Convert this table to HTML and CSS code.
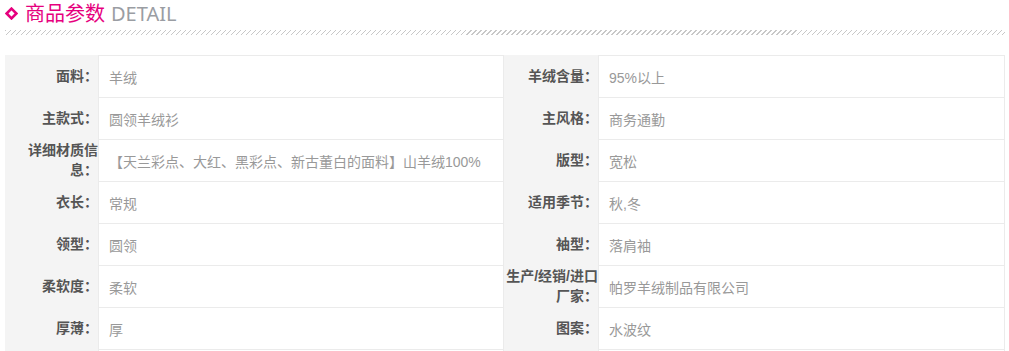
FILE: index.html
```html
<!DOCTYPE html>
<html lang="zh-CN">
<head>
<meta charset="utf-8">
<title>商品参数</title>
<link rel="stylesheet" href="styles.css">
</head>
<body>
<div class="detail">
  <div class="title">
    <svg class="diamond" width="13" height="13" viewBox="0 0 13 13"><polygon points="6.5,1.6 11.4,6.5 6.5,11.4 1.6,6.5" fill="none" stroke="#e6007e" stroke-width="2.6"/></svg>
    <span class="cn">商品参数</span>
    <span class="en">DETAIL</span>
  </div>
  <div class="hatch"></div>
  <div class="params">
    <div class="k"><span>面料：</span></div><div class="v">羊绒</div>
    <div class="k"><span>羊绒含量：</span></div><div class="v">95%以上</div>
    <div class="k"><span>主款式：</span></div><div class="v">圆领羊绒衫</div>
    <div class="k"><span>主风格：</span></div><div class="v">商务通勤</div>
    <div class="k"><span>详细材质信息：</span></div><div class="v">【天兰彩点、大红、黑彩点、新古董白的面料】山羊绒100%</div>
    <div class="k"><span>版型：</span></div><div class="v">宽松</div>
    <div class="k"><span>衣长：</span></div><div class="v">常规</div>
    <div class="k"><span>适用季节：</span></div><div class="v">秋,冬</div>
    <div class="k"><span>领型：</span></div><div class="v">圆领</div>
    <div class="k"><span>袖型：</span></div><div class="v">落肩袖</div>
    <div class="k"><span>柔软度：</span></div><div class="v">柔软</div>
    <div class="k"><span>生产/经销/进口厂家：</span></div><div class="v">帕罗羊绒制品有限公司</div>
    <div class="k"><span>厚薄：</span></div><div class="v">厚</div>
    <div class="k"><span>图案：</span></div><div class="v">水波纹</div>
    <div class="k"></div><div class="v"></div>
    <div class="k"></div><div class="v"></div>
  </div>
</div>
</body>
</html>
```

FILE: styles.css
```css
html, body {
  margin: 0;
  padding: 0;
  overflow: hidden;
  background: #fff;
}

.detail {
  width: 1000px;
  padding-left: 5px;
  font-family: "Liberation Sans", "Noto Sans CJK SC", sans-serif;
}

.title {
  display: flex;
  align-items: center;
  height: 28px;
  font-family: "Noto Sans", "Noto Sans CJK SC", sans-serif;
  font-size: 20px;
  line-height: 28px;
}

.diamond {
  display: block;
  margin-right: 7px;
  margin-top: -2px;
}

.cn {
  color: #e6007e;
}

.en {
  color: #9a9da3;
  margin-left: 6px;
}

.hatch {
  margin-top: 2px;
  height: 5px;
  background-image: repeating-linear-gradient(135deg, #c8c8c8 0 1px, transparent 1px 3.54px);
}

.params {
  margin-top: 20px;
  display: grid;
  grid-template-columns: 93px 406px 94px 407px;
  grid-auto-rows: 42px;
  font-size: 14px;
}

.k {
  background: #f4f4f4;
  display: flex;
  align-items: center;
  justify-content: flex-end;
  text-align: right;
  font-weight: bold;
  color: #555;
  line-height: 20px;
}

.v {
  border: 1px solid #ebebeb;
  border-bottom: none;
  display: flex;
  align-items: center;
  padding-left: 10px;
  color: #999;
}
```
